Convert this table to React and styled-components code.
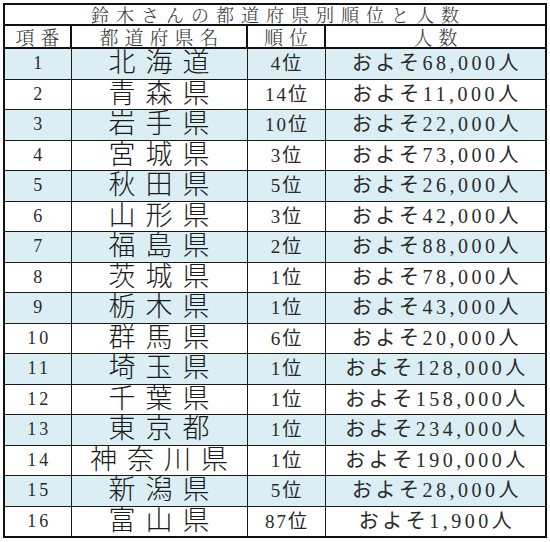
import React from "react";
import styled, { createGlobalStyle } from "styled-components";

const Global = createGlobalStyle`
  html, body { margin: 0; padding: 0; background: #fff; }
  body { font-family: "Noto Serif CJK JP", "Liberation Serif", "Noto Sans CJK JP", serif; color: #222; }
`;

const Wrap = styled.div`
  padding: 3px 0 0 3px;
`;

const Table = styled.table`
  border-collapse: collapse;
  width: 542px;
  table-layout: fixed;
  border: 2.5px solid #111;
`;

const Col = styled.col`
  width: ${(p) => p.$w}px;
`;

const Box = styled.div`
  height: ${(p) => p.$h}px;
  line-height: ${(p) => p.$h}px;
  overflow: hidden;
  white-space: nowrap;
`;

const TitleCell = styled.td`
  padding: 0;
  text-align: center;
  font-size: 18px;
  font-weight: 300;
  letter-spacing: 7px;
  text-indent: 7px;
  border: 2px solid #111;
  color: #333;
`;

const HeadCell = styled.th`
  padding: 0;
  font-weight: 300;
  text-align: center;
  font-size: 19px;
  letter-spacing: 6px;
  text-indent: 6px;
  border: 2px solid #111;
  color: #333;
`;

const Row = styled.tr`
  background: ${(p) => (p.$shade ? "#dbeef3" : "#fff")};
`;

const Cell = styled.td`
  padding: 0;
  text-align: center;
  border: 1.6px solid #1a1a1a;
  font-family: "Liberation Serif", "Noto Sans CJK JP", serif;
  font-size: ${(p) => p.$size || 18}px;
  letter-spacing: ${(p) => p.$ls || 0}px;
  text-indent: ${(p) => p.$ls || 0}px;
  color: #2a2a2a;
`;

const Name = styled(Cell)`
  font-size: 27px;
  font-weight: 300;
  letter-spacing: 10px;
  text-indent: 10px;
  color: #1a1a1a;
`;

const data = [
  ["1", "北海道", "4位", "およそ68,000人"],
  ["2", "青森県", "14位", "およそ11,000人"],
  ["3", "岩手県", "10位", "およそ22,000人"],
  ["4", "宮城県", "3位", "およそ73,000人"],
  ["5", "秋田県", "5位", "およそ26,000人"],
  ["6", "山形県", "3位", "およそ42,000人"],
  ["7", "福島県", "2位", "およそ88,000人"],
  ["8", "茨城県", "1位", "およそ78,000人"],
  ["9", "栃木県", "1位", "およそ43,000人"],
  ["10", "群馬県", "6位", "およそ20,000人"],
  ["11", "埼玉県", "1位", "およそ128,000人"],
  ["12", "千葉県", "1位", "およそ158,000人"],
  ["13", "東京都", "1位", "およそ234,000人"],
  ["14", "神奈川県", "1位", "およそ190,000人"],
  ["15", "新潟県", "5位", "およそ28,000人"],
  ["16", "富山県", "87位", "およそ1,900人"],
];

const RH = 29.5;

export default function App() {
  return (
    <>
      <Global />
      <Wrap>
        <Table>
          <colgroup>
            <Col $w={67} />
            <Col $w={176} />
            <Col $w={78} />
            <Col $w={221} />
          </colgroup>
          <tbody>
            <tr>
              <TitleCell colSpan={4}>
                <Box $h={19}>鈴木さんの都道府県別順位と人数</Box>
              </TitleCell>
            </tr>
            <tr>
              <HeadCell><Box $h={21}>項番</Box></HeadCell>
              <HeadCell><Box $h={21}>都道府県名</Box></HeadCell>
              <HeadCell><Box $h={21}>順位</Box></HeadCell>
              <HeadCell><Box $h={21}>人数</Box></HeadCell>
            </tr>
            {data.map((r, i) => (
              <Row key={r[0]} $shade={i % 2 === 0}>
                <Cell $size={18} $ls={3}><Box $h={RH}>{r[0]}</Box></Cell>
                <Name><Box $h={RH}>{r[1]}</Box></Name>
                <Cell $size={19} $ls={2}><Box $h={RH}>{r[2]}</Box></Cell>
                <Cell $size={20} $ls={3.5}><Box $h={RH}>{r[3]}</Box></Cell>
              </Row>
            ))}
          </tbody>
        </Table>
      </Wrap>
    </>
  );
}
